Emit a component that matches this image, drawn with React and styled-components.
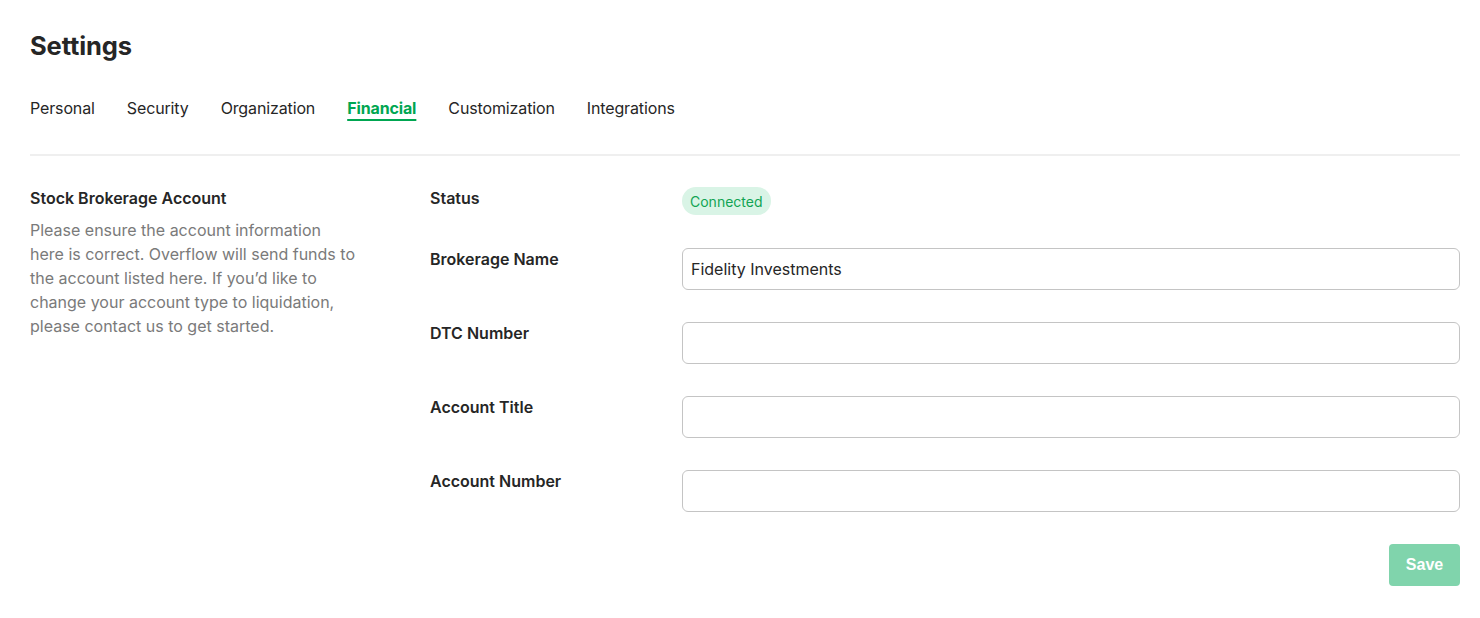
import React from "react";
import styled, { createGlobalStyle } from "styled-components";

const Global = createGlobalStyle`
  html, body { margin: 0; padding: 0; background: #fff; }
  body { font-family: Inter, "Noto Sans", sans-serif; color: #262626; }
  * { box-sizing: border-box; }
`;

const Page = styled.div`
  padding: 28px 20px 0 30px;
`;

const Title = styled.h1`
  margin: 0;
  font-size: 25.5px;
  line-height: 36px;
  font-weight: 700;
  color: #262626;
  letter-spacing: -0.1px;
`;

const Tabs = styled.nav`
  display: flex;
  gap: 32px;
  margin-top: 33px;
  padding-bottom: 35px;
  border-bottom: 2px solid #efefef;
`;

const Tab = styled.a`
  font-size: 16px;
  line-height: 22px;
  letter-spacing: -0.13px;
  color: ${(p) => (p.$active ? "#00a651" : "#262626")};
  font-weight: ${(p) => (p.$active ? 700 : 400)};
  text-decoration: ${(p) => (p.$active ? "underline" : "none")};
  text-underline-offset: 5px;
  text-decoration-thickness: 2px;
  cursor: pointer;
`;

const Section = styled.section`
  display: grid;
  grid-template-columns: 400px 1fr;
  padding-top: 31px;
`;

const Intro = styled.div`
  display: flex;
  flex-direction: column;
  gap: 9px;
`;

const IntroTitle = styled.h2`
  margin: 0;
  font-size: 16px;
  line-height: 22px;
  font-weight: 600;
  color: #262626;
`;

const IntroText = styled.p`
  margin: 0;
  width: 326px;
  font-size: 16px;
  line-height: 24px;
  color: #7a7a7a;
`;

const Form = styled.div`
  display: grid;
  grid-template-columns: 252px 1fr;
  row-gap: 32px;
`;

const Label = styled.div`
  font-size: 16px;
  line-height: 22px;
  font-weight: 600;
  color: #262626;
`;

const Badge = styled.span`
  display: inline-flex;
  align-items: center;
  height: 28px;
  margin-bottom: 1px;
  padding: 0 8px;
  border-radius: 14px;
  background: #d9f4e6;
  color: #12a454;
  font-size: 14px;
  justify-self: start;
`;

const Input = styled.input`
  width: 100%;
  height: 42px;
  border: 1px solid #c4c4c4;
  border-radius: 6px;
  padding: 0 8px;
  font-family: Inter, "Noto Sans", sans-serif;
  font-size: 16px;
  color: #262626;
  outline: none;
  background: #fff;
`;

const Actions = styled.div`
  display: flex;
  justify-content: flex-end;
  margin-top: 32px;
`;

const SaveButton = styled.button`
  width: 71px;
  height: 42px;
  border: none;
  border-radius: 4px;
  background: #80d4ac;
  color: #fff;
  font-family: "Liberation Sans", Arial, sans-serif;
  font-weight: 700;
  font-size: 16px;
`;

const tabs = ["Personal", "Security", "Organization", "Financial", "Customization", "Integrations"];

export default function App() {
  return (
    <Page>
      <Global />
      <Title>Settings</Title>
      <Tabs>
        {tabs.map((t) => (
          <Tab key={t} $active={t === "Financial"}>{t}</Tab>
        ))}
      </Tabs>
      <Section>
        <Intro>
          <IntroTitle>Stock Brokerage Account</IntroTitle>
          <IntroText>
            Please ensure the account information here is correct. Overflow will send funds to the
            account listed here. If you’d like to change your account type to liquidation, please
            contact us to get started.
          </IntroText>
        </Intro>
        <div>
          <Form>
            <Label>Status</Label>
            <Badge>Connected</Badge>
            <Label>Brokerage Name</Label>
            <Input defaultValue="Fidelity Investments" />
            <Label>DTC Number</Label>
            <Input />
            <Label>Account Title</Label>
            <Input />
            <Label>Account Number</Label>
            <Input />
          </Form>
          <Actions>
            <SaveButton>Save</SaveButton>
          </Actions>
        </div>
      </Section>
    </Page>
  );
}
